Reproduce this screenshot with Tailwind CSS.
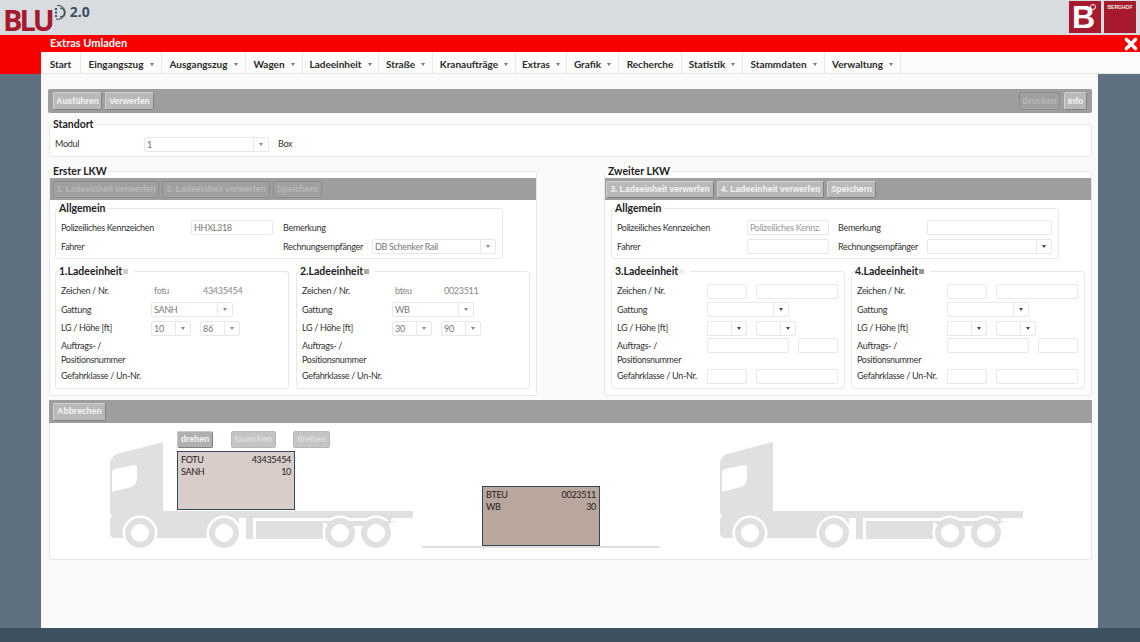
<!DOCTYPE html>
<html lang="de"><head><meta charset="utf-8"><title>Extras Umladen</title>
<script src="https://cdn.jsdelivr.net/npm/@tailwindcss/browser@4"></script>
</head>
<body class="w-[1140px] h-[642px] overflow-hidden bg-[#5f7180] flex flex-col font-['Lato',sans-serif] text-[9px] text-[#333] whitespace-nowrap">
<!-- header -->
<header class="h-[35px] bg-[#d8dcdf] flex justify-between shrink-0">
  <div class="flex items-start pl-[3px]">
    <span class="mt-[0px] text-[29px] leading-[40px] font-bold text-[#a6192e] tracking-[-3px] font-['Open_Sans',sans-serif]">BLU</span>
    <svg class="mt-[4px]" width="16" height="17" viewBox="0 0 16 17" fill="none"><path d="M5 1.500A7 7 0 1 1 4 15" stroke="#3a5060" stroke-width="1"/><path d="M8 4a4.500 4.500 0 0 1 0 9" stroke="#3a5060" stroke-width="1.500"/><rect x="3" y="4" width="2" height="2" fill="#3a5060"/><rect x="3" y="7.500" width="2" height="2" fill="#3a5060"/><rect x="3" y="11" width="2" height="2" fill="#3a5060"/></svg>
    <span class="ml-[2px] mt-[2px] text-[14px] leading-[19px] font-bold text-[#3a5060] font-['Open_Sans',sans-serif]">2.0</span>
  </div>
  <div class="flex gap-[3px] pt-[1px] pr-[4px]">
    <div class="relative w-[32px] h-[32px] bg-[#a6192e]"><span class="absolute left-[3px] top-[-2px] text-[32px] leading-[36px] font-bold text-white font-['Liberation_Sans',sans-serif]">B</span><span class="absolute right-[5px] top-[3px] w-[6px] h-[6px] rounded-full border border-white"></span></div>
    <div class="w-[32px] h-[32px] bg-[#a6192e] text-center text-[5px] leading-[5px] pt-[4px] font-bold text-[#eed] font-['Liberation_Sans',sans-serif]">BERGHOF</div>
  </div>
</header>
<!-- title bar -->
<div class="h-[17px] bg-[#f80000] flex items-center justify-between pl-[50px] pr-[2px] shrink-0">
  <span class="text-[11px] font-bold text-white">Extras Umladen</span>
  <svg width="14" height="14" viewBox="0 0 14 14"><path d="M2.500 2.500L11.500 11.500M11.500 2.500L2.500 11.500" stroke="#fff" stroke-width="3.600" stroke-linecap="round"/></svg>
</div>
<!-- menu -->
<div class="h-[22px] bg-[#f80000] pl-[41px] shrink-0">
  <nav class="h-full bg-[#fcfcfc] flex text-[10px] font-bold text-[#2b2b2b] border-b border-[#e8e8e8]">
    <a class="w-[40px] pt-[3px] flex items-center justify-center border-r border-[#e8e8e8]">Start</a>
    <a class="w-[81px] pt-[3px] flex items-center justify-center gap-[6px] border-r border-[#e8e8e8]">Eingangszug<i class="w-0 h-0 border-x-[2px] border-t-[3px] border-x-transparent border-t-[#777]"></i></a>
    <a class="w-[84px] pt-[3px] flex items-center justify-center gap-[6px] border-r border-[#e8e8e8]">Ausgangszug<i class="w-0 h-0 border-x-[2px] border-t-[3px] border-x-transparent border-t-[#777]"></i></a>
    <a class="w-[57px] pt-[3px] flex items-center justify-center gap-[6px] border-r border-[#e8e8e8]">Wagen<i class="w-0 h-0 border-x-[2px] border-t-[3px] border-x-transparent border-t-[#777]"></i></a>
    <a class="w-[76px] pt-[3px] flex items-center justify-center gap-[6px] border-r border-[#e8e8e8]">Ladeeinheit<i class="w-0 h-0 border-x-[2px] border-t-[3px] border-x-transparent border-t-[#777]"></i></a>
    <a class="w-[54px] pt-[3px] flex items-center justify-center gap-[6px] border-r border-[#e8e8e8]">Straße<i class="w-0 h-0 border-x-[2px] border-t-[3px] border-x-transparent border-t-[#777]"></i></a>
    <a class="w-[83px] pt-[3px] flex items-center justify-center gap-[6px] border-r border-[#e8e8e8]">Kranaufträge<i class="w-0 h-0 border-x-[2px] border-t-[3px] border-x-transparent border-t-[#777]"></i></a>
    <a class="w-[51px] pt-[3px] flex items-center justify-center gap-[6px] border-r border-[#e8e8e8]">Extras<i class="w-0 h-0 border-x-[2px] border-t-[3px] border-x-transparent border-t-[#777]"></i></a>
    <a class="w-[52px] pt-[3px] flex items-center justify-center gap-[6px] border-r border-[#e8e8e8]">Grafik<i class="w-0 h-0 border-x-[2px] border-t-[3px] border-x-transparent border-t-[#777]"></i></a>
    <a class="w-[63px] pt-[3px] flex items-center justify-center border-r border-[#e8e8e8]">Recherche</a>
    <a class="w-[61px] pt-[3px] flex items-center justify-center gap-[6px] border-r border-[#e8e8e8]">Statistik<i class="w-0 h-0 border-x-[2px] border-t-[3px] border-x-transparent border-t-[#777]"></i></a>
    <a class="w-[82px] pt-[3px] flex items-center justify-center gap-[6px] border-r border-[#e8e8e8]">Stammdaten<i class="w-0 h-0 border-x-[2px] border-t-[3px] border-x-transparent border-t-[#777]"></i></a>
    <a class="w-[76px] pt-[3px] flex items-center justify-center gap-[6px] border-r border-[#e8e8e8]">Verwaltung<i class="w-0 h-0 border-x-[2px] border-t-[3px] border-x-transparent border-t-[#777]"></i></a>
  </nav>
</div>
<!-- main -->
<div class="flex-1 min-h-0 pl-[41px]">
 <main class="w-[1057px] h-full bg-[#fafafa] pl-[7px] pr-[6px] pt-[15px] tracking-[-0.3px] [&_button]:tracking-normal [&_legend]:tracking-normal">
  <!-- top toolbar -->
  <div class="h-[24px] bg-[#9e9e9e] rounded-[2px] flex items-center justify-between px-[5px]">
    <div class="flex gap-[3px]">
      <button class="h-[18px] w-[49px] bg-[#b9b9b9] border border-[#d0d0d0] border-b-[#808080] border-r-[#808080] rounded-[2px] text-[8.500px] font-bold text-[#f4f4f4] font-['Liberation_Sans',sans-serif]">Ausführen</button>
      <button class="h-[18px] w-[49px] bg-[#b9b9b9] border border-[#d0d0d0] border-b-[#808080] border-r-[#808080] rounded-[2px] text-[8.500px] font-bold text-[#f4f4f4] font-['Liberation_Sans',sans-serif]">Verwerfen</button>
    </div>
    <div class="flex gap-[4px]">
      <button class="h-[18px] w-[41px] bg-[#a0a0a0] border border-[#8c8c8c] rounded-[2px] text-[8.500px] font-bold text-[#b8b8b8] font-['Liberation_Sans',sans-serif]">Drucken</button>
      <button class="h-[18px] w-[23px] bg-[#b9b9b9] border border-[#d0d0d0] border-b-[#808080] border-r-[#808080] rounded-[2px] text-[8.500px] font-bold text-[#f4f4f4] font-['Liberation_Sans',sans-serif]">Info</button>
    </div>
  </div>
  <!-- Standort -->
  <fieldset class="mt-[4px] ml-[1px] h-[40px] bg-white border border-[#e8e8e8] rounded-[3px] pl-[5px]">
    <legend class="ml-[-3px] px-[1px] h-[14px] text-[10.500px] leading-[14px] font-bold text-[#222]">Standort</legend>
    <div class="flex items-center h-[15px] mt-[6px]">
      <span class="w-[89px] mt-[-1px]">Modul</span>
      <div class="w-[125px] h-[15px] flex border border-[#e8e8e8] rounded-[2px] bg-white text-[#777]"><span class="flex-1 pl-[2px] leading-[14px]">1</span><span class="w-[15px] border-l border-[#e8e8e8] flex items-center justify-center"><i class="w-0 h-0 border-x-[2px] border-t-[3px] border-x-transparent border-t-[#888]"></i></span></div>
      <span class="ml-[9px] mt-[-1px]">Box</span>
    </div>
  </fieldset>
  <!-- LKW columns -->
  <div class="mt-[7px] ml-[1px] flex gap-[67px]">
    <!-- Erster LKW -->
    <fieldset class="w-[488px] h-[232px] bg-white border border-[#e8e8e8] rounded-[3px]">
      <legend class="ml-[2px] px-[1px] h-[14px] text-[10.500px] leading-[14px] font-bold text-[#222]">Erster LKW</legend>
      <div class="h-[22px] bg-[#9e9e9e] flex items-center gap-[3px] pl-[3px]">
        <button class="h-[17px] w-[106px] bg-[#a0a0a0] border border-[#8c8c8c] rounded-[2px] text-[8.500px] font-bold text-[#b8b8b8] font-['Liberation_Sans',sans-serif]">1. Ladeeinheit verwerfen</button>
        <button class="h-[17px] w-[108px] bg-[#a0a0a0] border border-[#8c8c8c] rounded-[2px] text-[8.500px] font-bold text-[#b8b8b8] font-['Liberation_Sans',sans-serif]">2. Ladeeinheit verwerfen</button>
        <button class="h-[17px] w-[49px] bg-[#a0a0a0] border border-[#8c8c8c] rounded-[2px] text-[8.500px] font-bold text-[#b8b8b8] font-['Liberation_Sans',sans-serif]">Speichern</button>
      </div>
      <fieldset class="mt-[1px] ml-[5px] w-[448px] h-[58px] border border-[#e8e8e8] rounded-[3px] pl-[5px]">
        <legend class="ml-[-3px] px-[1px] h-[14px] text-[10.500px] leading-[14px] font-bold text-[#222]">Allgemein</legend>
        <div class="flex items-center h-[19px] mt-[3px]">
          <span class="w-[130px]">Polizeiliches Kennzeichen</span>
          <div class="w-[82px] h-[15px] border border-[#e8e8e8] rounded-[2px] pl-[2px] leading-[14px] text-[#777]">HHXL318</div>
          <span class="ml-[10px] w-[89px]">Bemerkung</span>
        </div>
        <div class="flex items-center h-[15px] mt-[2px]">
          <span class="w-[222px]">Fahrer</span>
          <span class="w-[89px]">Rechnungsempfänger</span>
          <div class="w-[124px] h-[15px] flex border border-[#e8e8e8] rounded-[2px] text-[#777]"><span class="flex-1 pl-[2px] leading-[14px]">DB Schenker Rail</span><span class="w-[15px] border-l border-[#e8e8e8] flex items-center justify-center"><i class="w-0 h-0 border-x-[2px] border-t-[3px] border-x-transparent border-t-[#888]"></i></span></div>
        </div>
      </fieldset>
      <div class="mt-[5px] ml-[5px] flex gap-[7px]">
        <fieldset class="w-[234px] h-[125px] border border-[#e8e8e8] rounded-[3px] pl-[5px]">
          <legend class="ml-[-2px] pr-[6px] h-[14px] text-[10.500px] leading-[14px] font-bold text-[#222] flex items-center gap-[1px]">1.Ladeeinheit<i class="w-[5px] h-[5px] bg-[#d8cdc8]"></i></legend>
          <div class="flex items-center h-[18px] mt-[4px]"><span class="w-[93px]">Zeichen / Nr.</span><span class="w-[49px] text-[#888]">fotu</span><span class="text-[#888]">43435454</span></div>
          <div class="flex items-center h-[19px]"><span class="w-[90px]">Gattung</span><div class="w-[82px] h-[15px] flex border border-[#e8e8e8] rounded-[2px] text-[#777]"><span class="flex-1 pl-[2px] leading-[14px]">SANH</span><span class="w-[15px] border-l border-[#e8e8e8] flex items-center justify-center"><i class="w-0 h-0 border-x-[2px] border-t-[3px] border-x-transparent border-t-[#888]"></i></span></div></div>
          <div class="flex items-center h-[18px]"><span class="w-[90px]">LG / Höhe [ft]</span><div class="w-[40px] h-[15px] flex border border-[#e8e8e8] rounded-[2px] text-[#777]"><span class="flex-1 pl-[2px] leading-[14px]">10</span><span class="w-[15px] border-l border-[#e8e8e8] flex items-center justify-center"><i class="w-0 h-0 border-x-[2px] border-t-[3px] border-x-transparent border-t-[#888]"></i></span></div><div class="ml-[9px] w-[40px] h-[15px] flex border border-[#e8e8e8] rounded-[2px] text-[#777]"><span class="flex-1 pl-[2px] leading-[14px]">86</span><span class="w-[15px] border-l border-[#e8e8e8] flex items-center justify-center"><i class="w-0 h-0 border-x-[2px] border-t-[3px] border-x-transparent border-t-[#888]"></i></span></div></div>
          <div class="h-[29px] mt-[1px] pt-[1px] leading-[14px]">Auftrags- /<br>Positionsnummer</div>
          <div class="flex items-center h-[16px] mt-[1px]">Gefahrklasse / Un-Nr.</div>
        </fieldset>
        <fieldset class="w-[234px] h-[125px] border border-[#e8e8e8] rounded-[3px] pl-[5px]">
          <legend class="ml-[-2px] pr-[6px] h-[14px] text-[10.500px] leading-[14px] font-bold text-[#222] flex items-center gap-[1px]">2.Ladeeinheit<i class="w-[5px] h-[5px] bg-[#b9a79e]"></i></legend>
          <div class="flex items-center h-[18px] mt-[4px]"><span class="w-[93px]">Zeichen / Nr.</span><span class="w-[49px] text-[#888]">bteu</span><span class="text-[#888]">0023511</span></div>
          <div class="flex items-center h-[19px]"><span class="w-[90px]">Gattung</span><div class="w-[82px] h-[15px] flex border border-[#e8e8e8] rounded-[2px] text-[#777]"><span class="flex-1 pl-[2px] leading-[14px]">WB</span><span class="w-[15px] border-l border-[#e8e8e8] flex items-center justify-center"><i class="w-0 h-0 border-x-[2px] border-t-[3px] border-x-transparent border-t-[#888]"></i></span></div></div>
          <div class="flex items-center h-[18px]"><span class="w-[90px]">LG / Höhe [ft]</span><div class="w-[40px] h-[15px] flex border border-[#e8e8e8] rounded-[2px] text-[#777]"><span class="flex-1 pl-[2px] leading-[14px]">30</span><span class="w-[15px] border-l border-[#e8e8e8] flex items-center justify-center"><i class="w-0 h-0 border-x-[2px] border-t-[3px] border-x-transparent border-t-[#888]"></i></span></div><div class="ml-[9px] w-[40px] h-[15px] flex border border-[#e8e8e8] rounded-[2px] text-[#777]"><span class="flex-1 pl-[2px] leading-[14px]">90</span><span class="w-[15px] border-l border-[#e8e8e8] flex items-center justify-center"><i class="w-0 h-0 border-x-[2px] border-t-[3px] border-x-transparent border-t-[#888]"></i></span></div></div>
          <div class="h-[29px] mt-[1px] pt-[1px] leading-[14px]">Auftrags- /<br>Positionsnummer</div>
          <div class="flex items-center h-[16px] mt-[1px]">Gefahrklasse / Un-Nr.</div>
        </fieldset>
      </div>
    </fieldset>
    <!-- Zweiter LKW -->
    <fieldset class="w-[488px] h-[232px] bg-white border border-[#e8e8e8] rounded-[3px]">
      <legend class="ml-[2px] px-[1px] h-[14px] text-[10.500px] leading-[14px] font-bold text-[#222]">Zweiter LKW</legend>
      <div class="h-[22px] bg-[#9e9e9e] flex items-center gap-[3px] pl-[1px]">
        <button class="h-[17px] w-[108px] bg-[#b9b9b9] border border-[#d0d0d0] border-b-[#808080] border-r-[#808080] rounded-[2px] text-[8.500px] font-bold text-[#f4f4f4] font-['Liberation_Sans',sans-serif]">3. Ladeeinheit verwerfen</button>
        <button class="h-[17px] w-[107px] bg-[#b9b9b9] border border-[#d0d0d0] border-b-[#808080] border-r-[#808080] rounded-[2px] text-[8.500px] font-bold text-[#f4f4f4] font-['Liberation_Sans',sans-serif]">4. Ladeeinheit verwerfen</button>
        <button class="h-[17px] w-[49px] bg-[#b9b9b9] border border-[#d0d0d0] border-b-[#808080] border-r-[#808080] rounded-[2px] text-[8.500px] font-bold text-[#f4f4f4] font-['Liberation_Sans',sans-serif]">Speichern</button>
      </div>
      <fieldset class="mt-[1px] ml-[6px] w-[448px] h-[58px] border border-[#e8e8e8] rounded-[3px] pl-[5px]">
        <legend class="ml-[-3px] px-[1px] h-[14px] text-[10.500px] leading-[14px] font-bold text-[#222]">Allgemein</legend>
        <div class="flex items-center h-[19px] mt-[3px]">
          <span class="w-[130px]">Polizeiliches Kennzeichen</span>
          <div class="w-[82px] h-[15px] border border-[#e8e8e8] rounded-[2px] pl-[2px] leading-[14px] text-[#999]">Polizeiliches Kennz.</div>
          <span class="ml-[9px] w-[89px]">Bemerkung</span>
          <div class="w-[125px] h-[15px] border border-[#e8e8e8] rounded-[2px]"></div>
        </div>
        <div class="flex items-center h-[15px] mt-[2px]">
          <span class="w-[130px]">Fahrer</span>
          <div class="w-[82px] h-[15px] border border-[#e8e8e8] rounded-[2px]"></div>
          <span class="ml-[9px] w-[89px]">Rechnungsempfänger</span>
          <div class="w-[125px] h-[15px] flex border border-[#e8e8e8] rounded-[2px]"><span class="flex-1"></span><span class="w-[15px] border-l border-[#e8e8e8] flex items-center justify-center"><i class="w-0 h-0 border-x-[2px] border-t-[3px] border-x-transparent border-t-[#444]"></i></span></div>
        </div>
      </fieldset>
      <div class="mt-[5px] ml-[6px] flex gap-[6px]">
        <fieldset class="w-[234px] h-[125px] border border-[#e8e8e8] rounded-[3px] pl-[5px]">
          <legend class="ml-[-2px] pr-[6px] h-[14px] text-[10.500px] leading-[14px] font-bold text-[#222] flex items-center gap-[1px]">3.Ladeeinheit<i class="w-[5px] h-[5px] bg-[#eeeeee]"></i></legend>
          <div class="flex items-center h-[18px] mt-[4px]"><span class="w-[90px]">Zeichen / Nr.</span><div class="w-[40px] h-[15px] border border-[#e8e8e8] rounded-[2px]"></div><div class="ml-[9px] w-[82px] h-[15px] border border-[#e8e8e8] rounded-[2px]"></div></div>
          <div class="flex items-center h-[19px]"><span class="w-[90px]">Gattung</span><div class="w-[82px] h-[15px] flex border border-[#e8e8e8] rounded-[2px]"><span class="flex-1"></span><span class="w-[15px] border-l border-[#e8e8e8] flex items-center justify-center"><i class="w-0 h-0 border-x-[2px] border-t-[3px] border-x-transparent border-t-[#444]"></i></span></div></div>
          <div class="flex items-center h-[18px]"><span class="w-[90px]">LG / Höhe [ft]</span><div class="w-[40px] h-[15px] flex border border-[#e8e8e8] rounded-[2px]"><span class="flex-1"></span><span class="w-[15px] border-l border-[#e8e8e8] flex items-center justify-center"><i class="w-0 h-0 border-x-[2px] border-t-[3px] border-x-transparent border-t-[#444]"></i></span></div><div class="ml-[9px] w-[40px] h-[15px] flex border border-[#e8e8e8] rounded-[2px]"><span class="flex-1"></span><span class="w-[15px] border-l border-[#e8e8e8] flex items-center justify-center"><i class="w-0 h-0 border-x-[2px] border-t-[3px] border-x-transparent border-t-[#444]"></i></span></div></div>
          <div class="flex h-[29px] mt-[1px]"><div class="w-[90px] pt-[1px] leading-[14px]">Auftrags- /<br>Positionsnummer</div><div class="w-[82px] h-[15px] border border-[#e8e8e8] rounded-[2px]"></div><div class="ml-[9px] w-[40px] h-[15px] border border-[#e8e8e8] rounded-[2px]"></div></div>
          <div class="flex items-center h-[16px] mt-[1px]"><span class="w-[90px]">Gefahrklasse / Un-Nr.</span><div class="w-[40px] h-[15px] border border-[#e8e8e8] rounded-[2px]"></div><div class="ml-[9px] w-[82px] h-[15px] border border-[#e8e8e8] rounded-[2px]"></div></div>
        </fieldset>
        <fieldset class="w-[234px] h-[125px] border border-[#e8e8e8] rounded-[3px] pl-[5px]">
          <legend class="ml-[-2px] pr-[6px] h-[14px] text-[10.500px] leading-[14px] font-bold text-[#222] flex items-center gap-[1px]">4.Ladeeinheit<i class="w-[5px] h-[5px] bg-[#999999]"></i></legend>
          <div class="flex items-center h-[18px] mt-[4px]"><span class="w-[90px]">Zeichen / Nr.</span><div class="w-[40px] h-[15px] border border-[#e8e8e8] rounded-[2px]"></div><div class="ml-[9px] w-[82px] h-[15px] border border-[#e8e8e8] rounded-[2px]"></div></div>
          <div class="flex items-center h-[19px]"><span class="w-[90px]">Gattung</span><div class="w-[82px] h-[15px] flex border border-[#e8e8e8] rounded-[2px]"><span class="flex-1"></span><span class="w-[15px] border-l border-[#e8e8e8] flex items-center justify-center"><i class="w-0 h-0 border-x-[2px] border-t-[3px] border-x-transparent border-t-[#444]"></i></span></div></div>
          <div class="flex items-center h-[18px]"><span class="w-[90px]">LG / Höhe [ft]</span><div class="w-[40px] h-[15px] flex border border-[#e8e8e8] rounded-[2px]"><span class="flex-1"></span><span class="w-[15px] border-l border-[#e8e8e8] flex items-center justify-center"><i class="w-0 h-0 border-x-[2px] border-t-[3px] border-x-transparent border-t-[#444]"></i></span></div><div class="ml-[9px] w-[40px] h-[15px] flex border border-[#e8e8e8] rounded-[2px]"><span class="flex-1"></span><span class="w-[15px] border-l border-[#e8e8e8] flex items-center justify-center"><i class="w-0 h-0 border-x-[2px] border-t-[3px] border-x-transparent border-t-[#444]"></i></span></div></div>
          <div class="flex h-[29px] mt-[1px]"><div class="w-[90px] pt-[1px] leading-[14px]">Auftrags- /<br>Positionsnummer</div><div class="w-[82px] h-[15px] border border-[#e8e8e8] rounded-[2px]"></div><div class="ml-[9px] w-[40px] h-[15px] border border-[#e8e8e8] rounded-[2px]"></div></div>
          <div class="flex items-center h-[16px] mt-[1px]"><span class="w-[90px]">Gefahrklasse / Un-Nr.</span><div class="w-[40px] h-[15px] border border-[#e8e8e8] rounded-[2px]"></div><div class="ml-[9px] w-[82px] h-[15px] border border-[#e8e8e8] rounded-[2px]"></div></div>
        </fieldset>
      </div>
    </fieldset>
  </div>
  <!-- Abbrechen toolbar -->
  <div class="mt-[4px] ml-[1px] h-[23px] bg-[#9e9e9e] flex items-center pl-[4px]">
    <button class="h-[18px] w-[53px] bg-[#b9b9b9] border border-[#d0d0d0] border-b-[#808080] border-r-[#808080] rounded-[2px] text-[8.500px] font-bold text-[#f4f4f4] font-['Liberation_Sans',sans-serif]">Abbrechen</button>
  </div>
  <!-- diagram canvas -->
  <div class="relative ml-[1px] h-[137px] bg-white border border-t-0 border-[#e8e8e8] rounded-b-[3px]">
    <button class="absolute left-[127px] top-[8px] h-[17px] w-[36px] bg-[#b0b0b0] border border-[#c8c8c8] border-b-[#808080] border-r-[#808080] rounded-[2px] text-[8.500px] font-bold text-[#f4f4f4] font-['Liberation_Sans',sans-serif]">drehen</button>
    <button class="absolute left-[181px] top-[8px] h-[17px] w-[45px] bg-[#c4c4c4] border border-[#b8b8b8] rounded-[2px] text-[8.500px] font-bold text-[#dedede] font-['Liberation_Sans',sans-serif]">tauschen</button>
    <button class="absolute left-[243px] top-[8px] h-[17px] w-[37px] bg-[#c4c4c4] border border-[#b8b8b8] rounded-[2px] text-[8.500px] font-bold text-[#dedede] font-['Liberation_Sans',sans-serif]">drehen</button>
    <svg class="absolute left-[59px] top-[19px]" width="304" height="107" viewBox="0 0 304 107" fill="#e0e0e0">
      <path fill-rule="evenodd" d="M54 0V69H58V69H304V76H283L279 84L270 76H232L237 84L226 76H214V97H147V79H214V76H144V97H137V76H130V96H5Q1 95 1 91V77L3 74L1 71V22Q1 15 8 12ZM6 27Q3 28 3 31V50L22 45Q28 42 28 37V25Q28 23 25 23Z"/>
      <circle cx="31" cy="91" r="17.500" fill="#fff"/><circle cx="115" cy="91" r="17.500" fill="#fff"/>
      <circle cx="231" cy="91" r="17.500" fill="#fff"/><circle cx="267" cy="91" r="17.500" fill="#fff"/>
      <path d="M212 79H288L283 80L278 84H222Z" fill="#e0e0e0"/>
      <circle cx="31" cy="91" r="15"/><circle cx="115" cy="91" r="15"/><circle cx="231" cy="91" r="15"/><circle cx="267" cy="91" r="15"/>
      <circle cx="31" cy="91" r="9" fill="#fff"/><circle cx="115" cy="91" r="9" fill="#fff"/><circle cx="231" cy="91" r="9" fill="#fff"/><circle cx="267" cy="91" r="9" fill="#fff"/>
    </svg>
    <svg class="absolute left-[669px] top-[19px]" width="304" height="107" viewBox="0 0 304 107" fill="#e0e0e0">
      <path fill-rule="evenodd" d="M54 0V69H58V69H304V76H283L279 84L270 76H232L237 84L226 76H214V97H147V79H214V76H144V97H137V76H130V96H5Q1 95 1 91V77L3 74L1 71V22Q1 15 8 12ZM6 27Q3 28 3 31V50L22 45Q28 42 28 37V25Q28 23 25 23Z"/>
      <circle cx="31" cy="91" r="17.500" fill="#fff"/><circle cx="115" cy="91" r="17.500" fill="#fff"/>
      <circle cx="231" cy="91" r="17.500" fill="#fff"/><circle cx="267" cy="91" r="17.500" fill="#fff"/>
      <path d="M212 79H288L283 80L278 84H222Z" fill="#e0e0e0"/>
      <circle cx="31" cy="91" r="15"/><circle cx="115" cy="91" r="15"/><circle cx="231" cy="91" r="15"/><circle cx="267" cy="91" r="15"/>
      <circle cx="31" cy="91" r="9" fill="#fff"/><circle cx="115" cy="91" r="9" fill="#fff"/><circle cx="231" cy="91" r="9" fill="#fff"/><circle cx="267" cy="91" r="9" fill="#fff"/>
    </svg>
    <div class="absolute left-[372px] top-[123px] w-[238px] h-[2px] bg-[#e0e0e0]"></div>
    <div class="absolute left-[127px] top-[28px] w-[118px] h-[59px] bg-[#d8cdc8] border border-[#36485f] px-[3px] py-[2px] text-[9px] leading-[12px] text-[#222]">
      <div class="flex justify-between"><span>FOTU</span><span>43435454</span></div>
      <div class="flex justify-between"><span>SANH</span><span>10</span></div>
    </div>
    <div class="absolute left-[432px] top-[63px] w-[118px] h-[60px] bg-[#b9a79e] border border-[#36485f] px-[3px] py-[2px] text-[9px] leading-[12px] text-[#222]">
      <div class="flex justify-between"><span>BTEU</span><span>0023511</span></div>
      <div class="flex justify-between"><span>WB</span><span>30</span></div>
    </div>
  </div>
 </main>
</div>
<footer class="h-[14px] bg-[#3c5060] shrink-0"></footer>
</body></html>
